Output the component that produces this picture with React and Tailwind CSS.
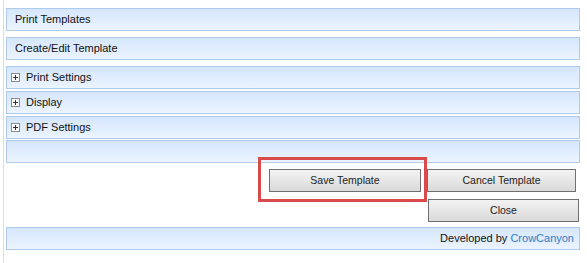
import React from "react";

const bar =
  "h-[23px] w-[574px] border border-[#aecbeb] bg-gradient-to-b from-[#d5e6fc] to-[#ecf4ff] flex items-center text-[11px] text-[#111]";

const btn =
  "h-[23px] border border-[#707070] bg-gradient-to-b from-[#f3f3f3] to-[#dadada] text-[10.5px] text-[#222] flex items-center justify-center";

function PlusBox() {
  return (
    <svg width="9" height="9" viewBox="0 0 9 9" className="shrink-0">
      <rect x="0.5" y="0.5" width="8" height="8" fill="#fff" stroke="#8a8a8a" />
      <path d="M2 4.5h5M4.5 2v5" stroke="#333" strokeWidth="1" />
    </svg>
  );
}

function Section({ title }) {
  return (
    <div className={bar + " pl-[4px] gap-[6px]"}>
      <PlusBox />
      <span>{title}</span>
    </div>
  );
}

export default function App() {
  return (
    <div
      className="w-[587px] h-[263px] bg-white overflow-hidden"
      style={{ fontFamily: '"Liberation Sans", Arial, sans-serif' }}
    >
      <div className="ml-[3px] h-full border-l border-[#dcdcdc] pl-[2px] pt-[8px]">
        <div className={bar + " pl-[8px]"}>Print Templates</div>
        <div className={bar + " pl-[8px] mt-[6px]"}>Create/Edit Template</div>

        <div className="mt-[6px] flex flex-col gap-[2px]">
          <Section title="Print Settings" />
          <Section title="Display" />
          <Section title="PDF Settings" />
        </div>
        <div className={bar + " mt-[1px]"}></div>

        <div className="w-[574px] mt-[6px] flex justify-end gap-[6px] pr-[4px]">
          <div className="relative">
            <button className={btn + " w-[152px]"}>Save Template</button>
            <div className="absolute left-[-11px] top-[-12px] w-[169px] h-[45px] border-[3px] border-[#d94a4a] pointer-events-none"></div>
          </div>
          <button className={btn + " w-[149px]"}>Cancel Template</button>
        </div>
        <div className="w-[574px] mt-[7px] flex justify-end pr-[1px]">
          <button className={btn + " w-[151px] h-[22px]"}>Close</button>
        </div>

        <div className={bar + " mt-[5px] justify-end pr-[5px]"}>
          <span>
            Developed by <span className="text-[#2f7bc5]">CrowCanyon</span>
          </span>
        </div>
      </div>
    </div>
  );
}
